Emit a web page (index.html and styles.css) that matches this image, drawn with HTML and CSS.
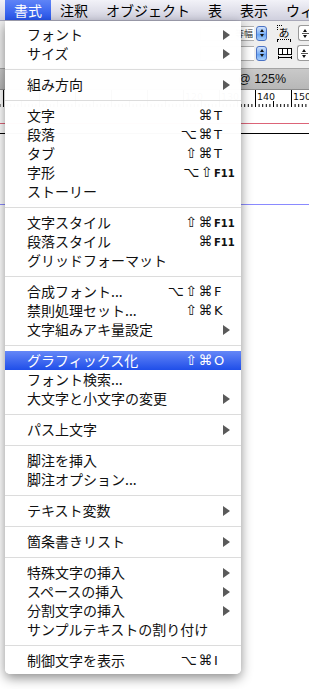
FILE: index.html
```html
<!DOCTYPE html>
<html>
<head>
  <meta charset="utf-8">
  <title>書式メニュー</title>
  <link rel="stylesheet" href="styles.css">
</head>
<body>
  <!-- Menu bar -->
  <div class="menubar">
    <span class="menubar-item active">書式</span>
    <span class="menubar-item">注釈</span>
    <span class="menubar-item">オブジェクト</span>
    <span class="menubar-item">表</span>
    <span class="menubar-item">表示</span>
    <span class="menubar-item">ウィンドウ</span>
  </div>

  <!-- Application window behind the menu -->
  <div class="app">
    <div class="toolbar">
      <div class="tool-row">
        <div class="popup">等幅</div>
        <div class="stepper-blue"><i class="up"></i><i class="down"></i></div>
        <div class="aki-icon">あ</div>
        <div class="stepper"><i class="up"></i><b></b><i class="down"></i></div>
      </div>
      <div class="tool-row">
        <div class="popup"></div>
        <div class="stepper-blue"><i class="up"></i><i class="down"></i></div>
        <svg class="grid-icon" width="16" height="13" viewBox="0 0 16 13">
          <rect x="1.5" y="1.5" width="13" height="6" fill="#fff" stroke="#000"/>
          <path d="M5.5 1.5v6M10.5 1.5v6" stroke="#000"/>
          <path d="M1.5 9v3M14.5 9v3M1.5 10.5h13" stroke="#000"/>
        </svg>
        <div class="stepper"><i class="up"></i><b></b><i class="down"></i></div>
      </div>
    </div>

    <div class="tabbar">@ 125%</div>

    <div class="ruler">
      <svg width="309" height="17" viewBox="0 0 309 17">
        <defs>
          <pattern id="ticks" x="255" y="0" width="36" height="17" patternUnits="userSpaceOnUse">
            <path d="M0.5 0v17M18.5 11v6M4.1 14v3M7.7 14v3M11.3 14v3M14.9 14v3M22.1 14v3M25.7 14v3M29.3 14v3M32.9 14v3" stroke="#000" stroke-width="1"/>
          </pattern>
        </defs>
        <rect width="309" height="17" fill="url(#ticks)"/>
        <g class="ruler-labels">
          <text x="185" y="10">120</text>
          <text x="221" y="10">130</text>
          <text x="257" y="10">140</text>
          <text x="293" y="10">150</text>
        </g>
      </svg>
    </div>

    <div class="document">
      <div class="guide guide-red"></div>
      <div class="guide guide-black"></div>
      <div class="guide guide-blue"></div>
    </div>
  </div>

  <!-- Dropdown menu -->
  <div class="dropdown">
    <div class="item"><span class="label">フォント</span><span class="arrow"></span></div>
    <div class="item"><span class="label">サイズ</span><span class="arrow"></span></div>
    <div class="sep"></div>
    <div class="item"><span class="label">組み方向</span><span class="arrow"></span></div>
    <div class="sep"></div>
    <div class="item"><span class="label">文字</span><span class="shortcut"><span class="mods">⌘</span><span class="key">T</span></span></div>
    <div class="item"><span class="label">段落</span><span class="shortcut"><span class="mods">⌥⌘</span><span class="key">T</span></span></div>
    <div class="item"><span class="label">タブ</span><span class="shortcut"><span class="mods">⇧⌘</span><span class="key">T</span></span></div>
    <div class="item"><span class="label">字形</span><span class="shortcut"><span class="mods">⌥⇧</span><span class="key fn">F11</span></span></div>
    <div class="item"><span class="label">ストーリー</span></div>
    <div class="sep"></div>
    <div class="item"><span class="label">文字スタイル</span><span class="shortcut"><span class="mods">⇧⌘</span><span class="key fn">F11</span></span></div>
    <div class="item"><span class="label">段落スタイル</span><span class="shortcut"><span class="mods">⌘</span><span class="key fn">F11</span></span></div>
    <div class="item"><span class="label">グリッドフォーマット</span></div>
    <div class="sep"></div>
    <div class="item"><span class="label">合成フォント...</span><span class="shortcut"><span class="mods">⌥⇧⌘</span><span class="key">F</span></span></div>
    <div class="item"><span class="label">禁則処理セット...</span><span class="shortcut"><span class="mods">⇧⌘</span><span class="key">K</span></span></div>
    <div class="item"><span class="label">文字組みアキ量設定</span><span class="arrow"></span></div>
    <div class="sep"></div>
    <div class="item selected"><span class="label">グラフィックス化</span><span class="shortcut"><span class="mods">⇧⌘</span><span class="key">O</span></span></div>
    <div class="item"><span class="label">フォント検索...</span></div>
    <div class="item"><span class="label">大文字と小文字の変更</span><span class="arrow"></span></div>
    <div class="sep"></div>
    <div class="item"><span class="label">パス上文字</span><span class="arrow"></span></div>
    <div class="sep"></div>
    <div class="item"><span class="label">脚注を挿入</span></div>
    <div class="item"><span class="label">脚注オプション...</span></div>
    <div class="sep"></div>
    <div class="item"><span class="label">テキスト変数</span><span class="arrow"></span></div>
    <div class="sep"></div>
    <div class="item"><span class="label">箇条書きリスト</span><span class="arrow"></span></div>
    <div class="sep"></div>
    <div class="item"><span class="label">特殊文字の挿入</span><span class="arrow"></span></div>
    <div class="item"><span class="label">スペースの挿入</span><span class="arrow"></span></div>
    <div class="item"><span class="label">分割文字の挿入</span><span class="arrow"></span></div>
    <div class="item"><span class="label">サンプルテキストの割り付け</span></div>
    <div class="sep"></div>
    <div class="item"><span class="label">制御文字を表示</span><span class="shortcut"><span class="mods">⌥⌘</span><span class="key">I</span></span></div>
  </div>
</body>
</html>
```

FILE: styles.css
```css
/* Base */
* {
  box-sizing: border-box;
}

html, body {
  margin: 0;
  padding: 0;
  height: 100%;
  overflow: hidden;
  background: #fff;
  font-family: "Noto Sans CJK JP", sans-serif;
}

body {
  display: flex;
  flex-direction: column;
}

/* Menu bar */
.menubar {
  height: 21px;
  flex: none;
  display: flex;
  padding-left: 5px;
  background: linear-gradient(#f2f2f8, #d0d0de);
  border-bottom: 1px solid #a8a8b8;
  overflow: hidden;
}

.menubar-item {
  padding: 0 9px;
  font-size: 14px;
  line-height: 20px;
  color: #000;
  white-space: nowrap;
}

.menubar-item.active {
  background: linear-gradient(#5f84f7, #2654ea);
  color: #fff;
}

/* Application window */
.app {
  flex: 1;
  display: flex;
  flex-direction: column;
}

.toolbar {
  height: 48px;
  flex: none;
  display: flex;
  flex-direction: column;
  gap: 4px;
  padding: 4px 0 0 200px;
  background: #eeeeee;
  border-bottom: 1px solid #a4a4a4;
  overflow: hidden;
}

.tool-row {
  display: flex;
  align-items: center;
  height: 16px;
}

.popup {
  flex: none;
  width: 54px;
  height: 15px;
  background: #fff;
  border: 1px solid #b0b0b0;
  border-right: none;
  font-size: 9px;
  line-height: 13px;
  text-align: right;
  padding-right: 1px;
  color: #333;
}

.stepper-blue {
  flex: none;
  width: 11px;
  height: 15px;
  margin-left: 2px;
  border: 1px solid #4a72c4;
  border-radius: 3px;
  background: linear-gradient(#d0e2fc, #7fb2f6 50%, #5e9ef2 51%, #a9d0fb);
  display: flex;
  flex-direction: column;
  align-items: center;
  justify-content: center;
  gap: 2px;
}

.stepper {
  flex: none;
  width: 13px;
  height: 16px;
  margin-left: 7px;
  border: 1px solid #9a9a9a;
  border-right: none;
  border-radius: 3px 0 0 3px;
  background: #fff;
  display: flex;
  flex-direction: column;
  align-items: center;
  justify-content: center;
  gap: 1px;
}

.stepper b {
  width: 7px;
  height: 1px;
  background: #555;
}

.up, .down {
  width: 0;
  height: 0;
  border-left: 2.5px solid transparent;
  border-right: 2.5px solid transparent;
}

.up {
  border-bottom: 3px solid #111;
}

.down {
  border-top: 3px solid #111;
}

.aki-icon {
  flex: none;
  position: relative;
  width: 14px;
  margin-left: 10px;
  font-size: 11px;
  line-height: 13px;
  text-align: center;
  color: #000;
  border-bottom: 1px dotted #000;
}

.aki-icon::before {
  content: "";
  position: absolute;
  left: 0;
  top: -1px;
  width: 4px;
  height: 4px;
  border-left: 1px dotted #000;
  border-top: 1px dotted #000;
}

.aki-icon::after {
  content: "";
  position: absolute;
  left: 0;
  right: 0;
  bottom: -3px;
  height: 3px;
  border-left: 1px solid #000;
  border-right: 1px solid #000;
}

.grid-icon {
  flex: none;
  margin-left: 10px;
  margin-right: -3px;
}

.tabbar {
  height: 21px;
  flex: none;
  padding-left: 238px;
  background: linear-gradient(#c9c9c9, #b7b7b7);
  border-bottom: 1px solid #8c8c8c;
  font-family: "Liberation Sans", sans-serif;
  font-size: 12.5px;
  line-height: 20px;
  color: #111;
  white-space: nowrap;
}

.ruler {
  height: 17px;
  flex: none;
  background: #fff;
}

.ruler svg {
  display: block;
}

.ruler-labels text {
  font-family: "DejaVu Sans", sans-serif;
  font-size: 9.5px;
  fill: #111;
}

.document {
  flex: 1;
  background: #fff;
}

.guide {
  height: 1px;
}

.guide-red {
  margin-top: 16px;
  background: #dc6478;
}

.guide-black {
  margin-top: 9px;
  background: #000;
}

.guide-blue {
  margin-top: 70px;
  background: #8a8aff;
}

/* Dropdown menu */
.dropdown {
  position: absolute;
  top: 21px;
  left: 5px;
  width: 236px;
  padding: 4px 0;
  background: rgba(255, 255, 255, 0.98);
  border-radius: 0 0 5px 5px;
  box-shadow: 0 4px 12px rgba(0, 0, 0, 0.45);
}

.item {
  display: flex;
  align-items: center;
  height: 19px;
  padding: 0 5px 0 22px;
  font-size: 14px;
  line-height: 19px;
  color: #111;
  white-space: nowrap;
}

.item .label {
  flex: 1;
}

.item.selected {
  background: linear-gradient(#6587f7, #1f4ee9);
  color: #fff;
}

.shortcut {
  display: flex;
  align-items: baseline;
  font-family: "DejaVu Sans", sans-serif;
  font-size: 13px;
}

.mods {
  text-align: right;
  font-size: 14px;
  letter-spacing: 1.5px;
}

.key {
  width: 22px;
}

.key.fn {
  font-size: 10px;
  font-weight: bold;
}

.arrow {
  width: 0;
  height: 0;
  margin-right: 6px;
  border-left: 7px solid #5a5a5a;
  border-top: 5px solid transparent;
  border-bottom: 5px solid transparent;
}

.sep {
  height: 1px;
  margin: 6px 0 5px;
  background: #dcdcdc;
}
```
